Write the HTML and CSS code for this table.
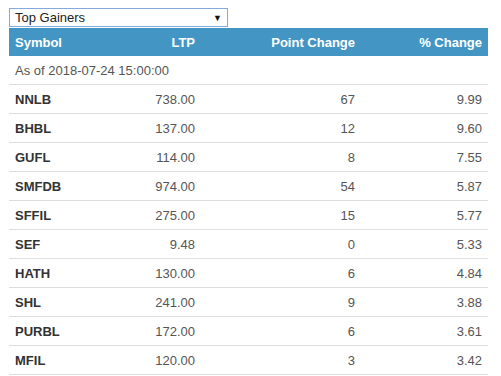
FILE: index.html
```html
<!DOCTYPE html>
<html>
<head>
<meta charset="utf-8">
<link rel="stylesheet" href="styles.css">
</head>
<body>
<div class="wrap">
  <div class="select"><span>Top Gainers</span><span class="arrow">&#9660;</span></div>
  <table class="tbl">
    <thead>
      <tr><th class="l">Symbol</th><th>LTP</th><th>Point Change</th><th>% Change</th></tr>
    </thead>
    <tbody>
      <tr><td class="asof" colspan="4">As of 2018-07-24 15:00:00</td></tr>
      <tr><td class="sym">NNLB</td><td>738.00</td><td>67</td><td>9.99</td></tr>
      <tr><td class="sym">BHBL</td><td>137.00</td><td>12</td><td>9.60</td></tr>
      <tr><td class="sym">GUFL</td><td>114.00</td><td>8</td><td>7.55</td></tr>
      <tr><td class="sym">SMFDB</td><td>974.00</td><td>54</td><td>5.87</td></tr>
      <tr><td class="sym">SFFIL</td><td>275.00</td><td>15</td><td>5.77</td></tr>
      <tr><td class="sym">SEF</td><td>9.48</td><td>0</td><td>5.33</td></tr>
      <tr><td class="sym">HATH</td><td>130.00</td><td>6</td><td>4.84</td></tr>
      <tr><td class="sym">SHL</td><td>241.00</td><td>9</td><td>3.88</td></tr>
      <tr><td class="sym">PURBL</td><td>172.00</td><td>6</td><td>3.61</td></tr>
      <tr><td class="sym">MFIL</td><td>120.00</td><td>3</td><td>3.42</td></tr>
    </tbody>
  </table>
</div>
</body>
</html>
```

FILE: styles.css
```css
html, body { margin: 0; padding: 0; background: #fff; }
body { font-family: "Liberation Sans", Arial, sans-serif; font-size: 13px; color: #555; }
.wrap { padding: 8px 13px 0 9px; }
.select {
  width: 212px; height: 17px; border: 1px solid #86a9dc;
  display: flex; align-items: center; justify-content: space-between;
  padding: 0 0 0 5px; box-sizing: content-box; color: #222; font-size: 13px;
  margin-bottom: 1px;
}
.select .arrow { font-size: 9px; color: #111; margin-right: 5px; }
.tbl { width: 479px; border-collapse: collapse; table-layout: fixed; }
.tbl th {
  background: #4396c3; color: #fff; font-weight: bold; text-align: right;
  height: 28px; padding: 0 6px; font-size: 13px;
}
.tbl th.l { text-align: left; }
.tbl th:nth-child(1) { width: 80px; }
.tbl th:nth-child(2) { width: 88px; }
.tbl th:nth-child(3) { width: 148px; }
.tbl td {
  text-align: right; padding: 0 6px; height: 28px; border-bottom: 1px solid #ddd;
  color: #555;
}
.tbl td.sym { text-align: left; font-weight: bold; color: #333; }
.tbl td.asof { text-align: left; color: #555; }
```
